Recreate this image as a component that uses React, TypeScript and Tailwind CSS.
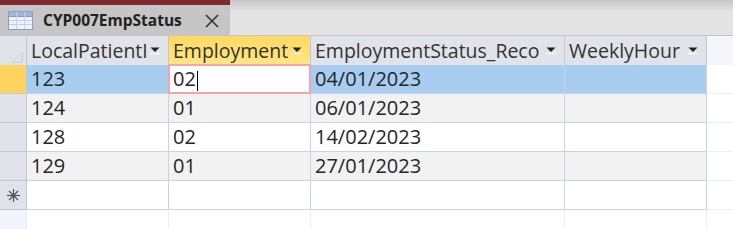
import React from 'react';

interface Row {
  id: string;
  emp: string;
  date: string;
}

const rows: Row[] = [
  { id: '123', emp: '02', date: '04/01/2023' },
  { id: '124', emp: '01', date: '06/01/2023' },
  { id: '128', emp: '02', date: '14/02/2023' },
  { id: '129', emp: '01', date: '27/01/2023' },
];

const colWidths = ['w-[142px]', 'w-[142px]', 'w-[254px]', 'w-[142px]'];

const TableIcon = () => (
  <svg width="25" height="19" viewBox="0 0 25 19">
    <rect x="0.5" y="0.5" width="24" height="18" fill="#eef3fb" stroke="#8b9dbd" />
    <rect x="1" y="1" width="23" height="4" fill="#9fb7df" />
    <line x1="1" y1="5.5" x2="24" y2="5.5" stroke="#8b9dbd" />
    <line x1="1" y1="9.5" x2="24" y2="9.5" stroke="#c3d0e6" />
    <line x1="1" y1="13.5" x2="24" y2="13.5" stroke="#c3d0e6" />
    <line x1="8.5" y1="1" x2="8.5" y2="18" stroke="#c3d0e6" />
    <line x1="16.5" y1="1" x2="16.5" y2="18" stroke="#c3d0e6" />
  </svg>
);

const DropArrow = () => (
  <svg width="10" height="7" viewBox="0 0 10 7" className="shrink-0">
    <polygon points="0.5,0.5 9.5,0.5 5,5" fill="#222" />
    <line x1="0" y1="6.5" x2="10" y2="6.5" stroke="#ffffff" />
  </svg>
);

const NewRowStar = () => (
  <svg width="15" height="15" viewBox="0 0 15 15">
    <g stroke="#555" strokeWidth="1.2">
      <line x1="7.5" y1="1" x2="7.5" y2="14" />
      <line x1="1" y1="7.5" x2="14" y2="7.5" />
      <line x1="3" y1="3" x2="12" y2="12" />
      <line x1="12" y1="3" x2="3" y2="12" />
    </g>
    <circle cx="7.5" cy="7.5" r="2" fill="#555" />
  </svg>
);

const HeaderCell = ({ label, width, active }: { label: string; width: string; active?: boolean }) => (
  <div
    className={`${width} shrink-0 h-full flex items-center pl-[4px] pr-[8px] border-r border-[#c3c7cf] ${
      active ? 'bg-[linear-gradient(to_bottom,#ffd863,#ffe784)]' : 'bg-[#e0e3e9]'
    }`}
  >
    <span className="flex-1 min-w-0 overflow-hidden whitespace-nowrap">{label}</span>
    <DropArrow />
  </div>
);

const App = () => {
  return (
    <div
      className="w-[733px] h-[229px] overflow-hidden bg-white text-[#262626]"
      style={{ fontFamily: '"Open Sans", "Noto Sans", sans-serif' }}
    >
      {/* onglet */}
      <div className="flex h-[36px] border-b border-[#c4c4c4]">
        <div className="w-[230px] shrink-0 flex flex-col bg-[#c6c6c6]">
          <div className="h-[5px] bg-[#7e2a2e]" />
          <div className="flex-1 flex items-center pl-[8px] pt-[1px]">
            <TableIcon />
            <span className="ml-[10px] text-[15.5px] font-bold text-[#222]">CYP007EmpStatus</span>
            <svg width="14" height="14" viewBox="0 0 14 14" className="ml-[23px]">
              <line x1="1" y1="1" x2="13" y2="13" stroke="#333" strokeWidth="1.6" />
              <line x1="13" y1="1" x2="1" y2="13" stroke="#333" strokeWidth="1.6" />
            </svg>
          </div>
        </div>
        <div className="flex-1 bg-[linear-gradient(to_bottom,#c6c6c6,#e4e4e4_12px)]" />
      </div>

      {/* en-têtes */}
      <div className="flex h-[29px] text-[19.5px] text-[#333] bg-[#f5f6fc]">
        <div className="w-[27px] shrink-0 h-full bg-[#e0e3e9] border-r border-[#c3c7cf] flex items-end justify-end pr-[3px] pb-[2px]">
          <svg width="12" height="11" viewBox="0 0 12 11">
            <defs>
              <linearGradient id="tri" x1="0" y1="0" x2="1" y2="1">
                <stop offset="0" stopColor="#f4f5f8" />
                <stop offset="1" stopColor="#d4d8df" />
              </linearGradient>
            </defs>
            <polygon points="11.5,0.5 11.5,10.5 0.5,10.5" fill="url(#tri)" stroke="#c8ccd4" strokeWidth="0.8" />
          </svg>
        </div>
        <HeaderCell label="LocalPatientI" width={colWidths[0]} />
        <HeaderCell label="Employment" width={colWidths[1]} active />
        <HeaderCell label="EmploymentStatus_Reco" width={colWidths[2]} />
        <HeaderCell label="WeeklyHour" width={colWidths[3]} />
      </div>

      {/* lignes */}
      {rows.map((row, i) => {
        const selected = i === 0;
        const rowBg = selected ? 'bg-[#a7cdf0]' : i % 2 === 1 ? 'bg-[#f2f2f2]' : 'bg-white';
        return (
          <div key={row.id} className="flex h-[29px] text-[20px]">
            <div
              className={`w-[27px] shrink-0 h-full border-r border-b border-[#c3c7cf] ${
                selected ? 'bg-[#ffd45e]' : 'bg-[#e0e3e9]'
              }`}
            />
            <div className={`${colWidths[0]} ${rowBg} shrink-0 h-full border-r border-b border-[#c9d3e5] flex items-center pl-[4px]`}>
              {row.id}
            </div>
            <div
              className={`${colWidths[1]} ${selected ? 'bg-white relative' : rowBg} shrink-0 h-full border-r border-b border-[#c9d3e5] flex items-center pl-[4px]`}
            >
              {row.emp}
              {selected && (
                <>
                  <span className="w-px h-[20px] bg-black ml-[1px] mt-[4px]" />
                  <div className="absolute -left-[1px] -top-[1px] -right-[1px] -bottom-[1px] border-2 border-[#f3a5a8]" />
                </>
              )}
            </div>
            <div className={`${colWidths[2]} ${rowBg} shrink-0 h-full border-r border-b border-[#c9d3e5] flex items-center pl-[4px]`}>
              {row.date}
            </div>
            <div className={`${colWidths[3]} ${rowBg} shrink-0 h-full border-r border-b border-[#c9d3e5]`} />
            <div className="flex-1 h-full border-b border-[#f0f1f6]" />
          </div>
        );
      })}

      {/* nouvelle ligne */}
      <div className="flex h-[29px]">
        <div className="w-[27px] shrink-0 h-full bg-[#e0e3e9] border-r border-b border-[#c3c7cf] flex items-center justify-center">
          <NewRowStar />
        </div>
        {colWidths.map((w, i) => (
          <div key={'n' + i} className={`${w} shrink-0 h-full border-r border-b border-[#c9d3e5]`} />
        ))}
        <div className="flex-1 h-full border-b border-[#f0f1f6]" />
      </div>

      {/* zone vide */}
      <div className="flex h-[19px]">
        <div className="w-[27px] shrink-0 h-full bg-[#f3f4fb] border-r border-[#e6e9f3]" />
        {colWidths.map((w, i) => (
          <div key={'e' + i} className={`${w} shrink-0 h-full border-r border-[#eef0f6]`} />
        ))}
        <div className="flex-1 h-full" />
      </div>
    </div>
  );
};

export default App;
